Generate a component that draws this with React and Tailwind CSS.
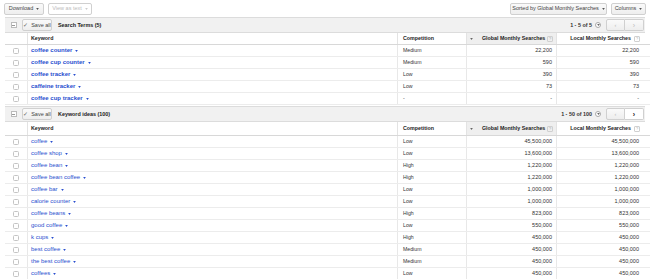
const searchTerms = [
  ['coffee counter', 'Medium', '22,200', '22,200'],
  ['coffee cup counter', 'Medium', '590', '590'],
  ['coffee tracker', 'Low', '390', '390'],
  ['caffeine tracker', 'Low', '73', '73'],
  ['coffee cup tracker', '-', '-', '-'],
]

const keywordIdeas = [
  ['coffee', 'Low', '45,500,000', '45,500,000'],
  ['coffee shop', 'Low', '13,600,000', '13,600,000'],
  ['coffee bean', 'High', '1,220,000', '1,220,000'],
  ['coffee bean coffee', 'High', '1,220,000', '1,220,000'],
  ['coffee bar', 'Low', '1,000,000', '1,000,000'],
  ['calorie counter', 'Low', '1,000,000', '1,000,000'],
  ['coffee beans', 'High', '823,000', '823,000'],
  ['good coffee', 'Low', '550,000', '550,000'],
  ['k cups', 'High', '450,000', '450,000'],
  ['best coffee', 'Medium', '450,000', '450,000'],
  ['the best coffee', 'Medium', '450,000', '450,000'],
  ['coffees', 'Low', '450,000', '450,000'],
]

const cols = 'grid grid-cols-[23px_370px_69px_90px_88px]'

const Caret = ({ className = 'fill-[#555]' }) => (
  <svg width="3" height="2" viewBox="0 0 4 3" className={className}>
    <path d="M0 0 L4 0 L2 3 Z" />
  </svg>
)

const Btn = ({ children, className = '' }) => (
  <div
    className={`h-[12px] flex items-center justify-center gap-[3px] border border-[#d0d0d0] rounded-[2px] bg-gradient-to-b from-[#fafafa] to-[#eeeeee] text-[5.5px] text-[#444] ${className}`}
  >
    {children}
  </div>
)

const Help = () => (
  <span className="w-[6px] h-[6px] border border-[#d0d0d0] rounded-[1px] text-[4px] leading-none flex items-center justify-center text-[#aaa] font-normal">
    ?
  </span>
)

const Checkbox = () => (
  <div className="w-[6px] h-[6px] border border-[#c4c4c4] rounded-[1.5px] bg-white" />
)

const SectionBar = ({ title, range, nextActive }) => (
  <div className="ml-[5px] w-[640px] flex items-center border-y border-[#dcdcdc] bg-[#f1f1f1] h-full">
    <div className="w-[17px] flex justify-center">
      <div className="w-[6px] h-[6px] border border-[#bbb] bg-white flex items-center justify-center">
        <div className="w-[3px] h-[1px] bg-[#999]" />
      </div>
    </div>
    <Btn className="w-[30px]">
      <span className="text-[#666]">✓</span>
      <span>Save all</span>
    </Btn>
    <span className="ml-[6px] text-[5.4px] font-bold text-[#222]">{title}</span>
    <div className="ml-auto flex items-center">
      <span className="text-[5.4px] font-bold text-[#333]">{range}</span>
      <span className="ml-[3px] w-[6px] h-[6px] rounded-full border border-[#aaa] bg-white flex items-center justify-center">
        <Caret className="fill-[#666]" />
      </span>
      <div className="ml-[5px] mr-[1px] flex">
        <Btn className="w-[19px] rounded-r-none text-[#bbb]">‹</Btn>
        <div
          className={`w-[19px] h-[12px] flex items-center justify-center border border-l-0 border-[#d0d0d0] rounded-r-[2px] text-[7px] leading-none ${
            nextActive ? 'bg-white text-[#222] font-bold' : 'bg-gradient-to-b from-[#fafafa] to-[#eeeeee] text-[#bbb]'
          }`}
        >
          ›
        </div>
      </div>
    </div>
  </div>
)

const ColHeader = ({ h }) => (
  <div className={`ml-[5px] ${cols} ${h} border-b border-[#d8d8d8] text-[5.3px] font-bold text-[#222]`}>
    <div className="border-r border-[#e3e3e3]" />
    <div className="flex items-center pl-[3px] border-r border-[#e3e3e3]">Keyword</div>
    <div className="flex items-center pl-[5px] border-r border-[#e3e3e3]">Competition</div>
    <div className="flex items-center pl-[3px] pr-[3px] bg-[#efefef] border-r border-[#e3e3e3]">
      <Caret className="fill-[#666]" />
      <span className="ml-[9px]">Global Monthly Searches</span>
      <span className="ml-auto">
        <Help />
      </span>
    </div>
    <div className="flex items-center justify-end gap-[3px] pr-[5px]">
      <span>Local Monthly Searches</span>
      <Help />
    </div>
  </div>
)

const Row = ({ row, bold }) => (
  <div className={`ml-[5px] ${cols} h-[12px] border-b border-[#ececec] text-[#333]`}>
    <div className="flex items-center justify-center border-r border-[#e8e8e8]">
      <Checkbox />
    </div>
    <div className="flex items-center pl-[3px] border-r border-[#e8e8e8] gap-[3px]">
      <span className={`text-[6px] text-[#2a4fcf] ${bold ? 'font-bold' : ''}`}>{row[0]}</span>
      <Caret className="fill-[#2a4fcf]" />
    </div>
    <div className="flex items-center pl-[5px] text-[5.2px] border-r border-[#e8e8e8]">{row[1]}</div>
    <div className="flex items-center justify-end pr-[4px] text-[5.5px] border-r border-[#e8e8e8]">{row[2]}</div>
    <div className="flex items-center justify-end pr-[6px] text-[5.5px]">{row[3]}</div>
  </div>
)

export default function App() {
  return (
    <div className="w-[650px] h-[279px] overflow-hidden bg-white font-['Liberation_Sans',Arial,sans-serif]">
      <div className="h-[17px] flex items-center px-[4px]">
        <Btn className="w-[40px]">
          <span>Download</span>
          <Caret />
        </Btn>
        <Btn className="w-[44px] ml-[4px] text-[#bbb] bg-none bg-white">
          <span>View as text</span>
          <Caret className="fill-[#ccc]" />
        </Btn>
        <Btn className="w-[97px] ml-auto">
          <span>Sorted by Global Monthly Searches</span>
          <Caret />
        </Btn>
        <Btn className="w-[35px] ml-[4px]">
          <span>Columns</span>
          <Caret />
        </Btn>
      </div>
      <div className="h-[16px]">
        <SectionBar title="Search Terms (5)" range="1 - 5 of 5" />
      </div>
      <ColHeader h="h-[12px]" />
      {searchTerms.map((r) => (
        <Row key={r[0]} row={r} bold />
      ))}
      <div className="h-[17px] pt-[1px]">
        <SectionBar title="Keyword ideas (100)" range="1 - 50 of 100" nextActive />
      </div>
      <ColHeader h="h-[14px]" />
      {keywordIdeas.map((r) => (
        <Row key={r[0]} row={r} />
      ))}
    </div>
  )
}
